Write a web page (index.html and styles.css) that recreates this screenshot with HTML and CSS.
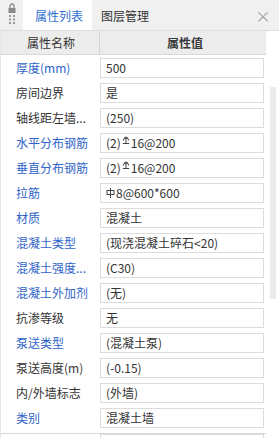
FILE: index.html
```html
<!DOCTYPE html>
<html>
<head>
<meta charset="utf-8">
<link rel="stylesheet" href="styles.css">
</head>
<body>
<div class="panel">
  <div class="tabbar">
    <div class="grip">
      <svg width="10" height="22" viewBox="0 0 10 22">
        <path d="M3 6V4a2 2 0 0 1 4 0v2" fill="none" stroke="#8a8a8a" stroke-width="1.3"/>
        <rect x="1.5" y="6" width="7" height="5" fill="#8a8a8a"/>
        <rect x="2" y="13" width="2" height="2" fill="#9a9a9a"/>
        <rect x="6" y="13" width="2" height="2" fill="#9a9a9a"/>
        <rect x="2" y="16.5" width="2" height="2" fill="#9a9a9a"/>
        <rect x="6" y="16.5" width="2" height="2" fill="#9a9a9a"/>
        <rect x="2" y="20" width="2" height="2" fill="#9a9a9a"/>
        <rect x="6" y="20" width="2" height="2" fill="#9a9a9a"/>
      </svg>
    </div>
    <div class="tab active">属性列表</div>
    <div class="tab">图层管理</div>
    <div class="close">×</div>
  </div>
  <div class="body">
    <div class="list">
      <div class="head">
        <div class="hcell name">属性名称</div>
        <div class="hcell val">属性值</div>
      </div>
      <div class="row"><div class="lbl blue">厚度(mm)</div><div class="box">500</div></div>
      <div class="row"><div class="lbl">房间边界</div><div class="box">是</div></div>
      <div class="row"><div class="lbl">轴线距左墙...</div><div class="box">(250)</div></div>
      <div class="row"><div class="lbl blue">水平分布钢筋</div><div class="box">(2)<svg class="bar" width="8" height="8" viewBox="0 0 8 8"><path d="M4 0.5V7.5M0.8 7.5H7.2M1.3 4.5A2.7 2.7 0 0 1 6.7 4.5M2 2H6" fill="none" stroke="#444" stroke-width="1"/></svg>16@200</div></div>
      <div class="row"><div class="lbl blue">垂直分布钢筋</div><div class="box">(2)<svg class="bar" width="8" height="8" viewBox="0 0 8 8"><path d="M4 0.5V7.5M0.8 7.5H7.2M1.3 4.5A2.7 2.7 0 0 1 6.7 4.5M2 2H6" fill="none" stroke="#444" stroke-width="1"/></svg>16@200</div></div>
      <div class="row"><div class="lbl blue">拉筋</div><div class="box"><svg class="phi" width="9" height="10" viewBox="0 0 9 10"><rect x="1" y="2.5" width="7" height="4" fill="none" stroke="#444" stroke-width="1"/><path d="M4.5 0V10" stroke="#444" stroke-width="1"/></svg>8@600*600</div></div>
      <div class="row"><div class="lbl blue">材质</div><div class="box">混凝土</div></div>
      <div class="row"><div class="lbl blue">混凝土类型</div><div class="box">(现浇混凝土碎石&lt;20)</div></div>
      <div class="row"><div class="lbl blue">混凝土强度...</div><div class="box">(C30)</div></div>
      <div class="row"><div class="lbl blue">混凝土外加剂</div><div class="box">(无)</div></div>
      <div class="row"><div class="lbl">抗渗等级</div><div class="box">无</div></div>
      <div class="row"><div class="lbl blue">泵送类型</div><div class="box">(混凝土泵)</div></div>
      <div class="row"><div class="lbl">泵送高度(m)</div><div class="box">(-0.15)</div></div>
      <div class="row"><div class="lbl">内/外墙标志</div><div class="box">(外墙)</div></div>
      <div class="row"><div class="lbl blue">类别</div><div class="box">混凝土墙</div></div>
      <div class="row cut"><div class="lbl">起点顶标</div><div class="box">(层顶标高(当前层顶标高))</div></div>
    </div>
    <div class="scroll"><div class="thumb"></div></div>
  </div>
</div>
</body>
</html>
```
FILE: styles.css
```css
html, body {
  margin: 0;
  padding: 0;
  background: #ffffff;
}
.panel {
  width: 279px;
  height: 438px;
  overflow: hidden;
  font-family: "Noto Sans CJK SC", "Noto Sans", sans-serif;
  font-size: 12px;
  color: #333333;
  background: #ffffff;
}
.tabbar {
  display: flex;
  align-items: stretch;
  height: 30px;
  background: #f0f0f0;
  border-bottom: 1px solid #dedede;
}
.grip {
  width: 23px;
  display: flex;
  justify-content: center;
  padding-top: 2px;
}
.grip svg {
  display: block;
}
.tab {
  display: flex;
  align-items: center;
  white-space: nowrap;
  color: #333333;
  padding: 0 9px;
}
.tab.active {
  background: #ffffff;
  color: #2f6fd0;
  padding: 0 9px 0 12px;
}
.close {
  margin-left: auto;
  width: 26px;
  display: flex;
  align-items: center;
  justify-content: center;
  font-size: 15px;
  color: #a0a0a0;
  padding-right: 3px;
}
.body {
  display: flex;
  border-left: 1px solid #e6e6e6;
}
.list {
  width: 265px;
}
.head {
  display: flex;
  height: 23px;
  background: #ececec;
  border-bottom: 1px solid #d9d9d9;
}
.hcell {
  display: flex;
  align-items: center;
}
.hcell.name {
  width: 99px;
  box-sizing: border-box;
  padding-left: 26px;
  border-right: 1px solid #d4d4d4;
}
.hcell.val {
  flex: 1;
  justify-content: center;
  font-weight: 600;
  color: #3a3a3a;
  padding-left: 4px;
}
.row {
  display: flex;
  height: 25px;
  box-sizing: border-box;
  padding-top: 3px;
}
.lbl {
  width: 99px;
  box-sizing: border-box;
  padding-left: 15px;
  height: 20px;
  line-height: 20px;
  white-space: nowrap;
  color: #333333;
}
.lbl.blue {
  color: #2f63c9;
}
.box {
  width: 164px;
  height: 20px;
  box-sizing: border-box;
  border: 1px solid #dcdcdc;
  background: #ffffff;
  padding-left: 5px;
  line-height: 18px;
  white-space: nowrap;
  overflow: hidden;
  color: #333333;
}
.bar {
  vertical-align: 4px;
  margin: 0 1px;
}
.phi {
  vertical-align: 0px;
  margin-right: 1px;
}
.row.cut {
  margin-top: 3px;
  border-top: 1px solid #d6d6d6;
  padding-top: 0;
}
.scroll {
  width: 13px;
  display: flex;
  justify-content: center;
  padding-top: 56px;
}
.thumb {
  width: 6px;
  height: 212px;
  background: #ebebeb;
}
```
